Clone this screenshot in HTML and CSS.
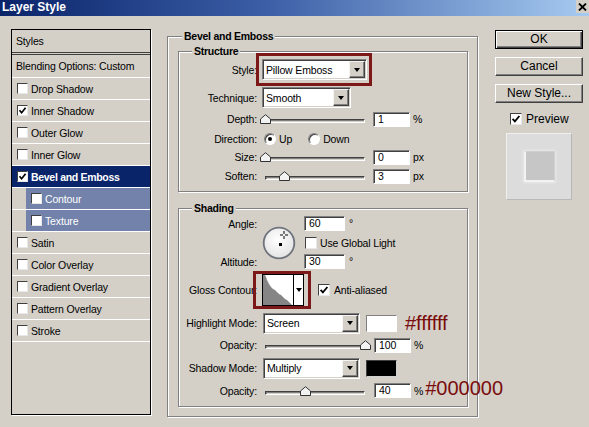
FILE: index.html
```html
<!DOCTYPE html>
<html>
<head>
<meta charset="utf-8">
<link rel="stylesheet" href="styles.css">
</head>
<body>
<div class="dialog">
  <div class="titlebar">
    <span class="title">Layer Style</span>
    <span class="close"><svg width="9" height="8" viewBox="0 0 9 8"><path d="M1 0.5 L8 7.5 M8 0.5 L1 7.5" stroke="#000" stroke-width="1.8"/></svg></span>
  </div>
  <div class="main">
    <div class="list">
      <div class="item head styles">Styles</div>
      <div class="item head blend">Blending Options: Custom</div>
      <div class="item"><span class="cb"></span>Drop Shadow</div>
      <div class="item"><span class="cb"><svg width="9" height="9" viewBox="0 0 9 9"><path d="M1.5 4.3 L3.6 6.7 L7.6 1.8" fill="none" stroke="#000" stroke-width="1.7"/></svg></span>Inner Shadow</div>
      <div class="item"><span class="cb"></span>Outer Glow</div>
      <div class="item"><span class="cb"></span>Inner Glow</div>
      <div class="item sel"><span class="cb"><svg width="9" height="9" viewBox="0 0 9 9"><path d="M1.5 4.3 L3.6 6.7 L7.6 1.8" fill="none" stroke="#000" stroke-width="1.7"/></svg></span>Bevel and Emboss</div>
      <div class="item sub"><span class="cb"></span>Contour</div>
      <div class="item sub"><span class="cb"></span>Texture</div>
      <div class="item"><span class="cb"></span>Satin</div>
      <div class="item"><span class="cb"></span>Color Overlay</div>
      <div class="item"><span class="cb"></span>Gradient Overlay</div>
      <div class="item"><span class="cb"></span>Pattern Overlay</div>
      <div class="item"><span class="cb"></span>Stroke</div>
    </div>

    <div class="group outer">
      <span class="gtitle">Bevel and Emboss</span>

      <div class="group structure">
        <span class="gtitle">Structure</span>
        <div class="row r-style">
          <span class="lbl">Style:</span>
          <div class="redbox rb-style">
            <div class="select w-style"><span class="val">Pillow Emboss</span><span class="arrow"><span class="tri"></span></span></div>
          </div>
        </div>
        <div class="row r-tech">
          <span class="lbl">Technique:</span>
          <div class="select w-tech"><span class="val">Smooth</span><span class="arrow"><span class="tri"></span></span></div>
        </div>
        <div class="row r-depth">
          <span class="lbl">Depth:</span>
          <div class="slider"><div class="track"></div><svg class="thumb" style="left:0%" width="11" height="10" viewBox="0 0 11 10"><path d="M0.5 9.5 L0.5 5 L5.5 0.7 L10.5 5 L10.5 9.5 Z" fill="#f2f2f2" stroke="#333" stroke-width="1"/></svg></div>
          <span class="num">1</span><span class="unit">%</span>
        </div>
        <div class="row r-dir">
          <span class="lbl">Direction:</span>
          <span class="radio on"></span><span class="rtext">Up</span>
          <span class="radio gap"></span><span class="rtext">Down</span>
        </div>
        <div class="row r-size">
          <span class="lbl">Size:</span>
          <div class="slider"><div class="track"></div><svg class="thumb" style="left:0%" width="11" height="10" viewBox="0 0 11 10"><path d="M0.5 9.5 L0.5 5 L5.5 0.7 L10.5 5 L10.5 9.5 Z" fill="#f2f2f2" stroke="#333" stroke-width="1"/></svg></div>
          <span class="num">0</span><span class="unit">px</span>
        </div>
        <div class="row r-soft">
          <span class="lbl">Soften:</span>
          <div class="slider"><div class="track"></div><svg class="thumb" style="left:19%" width="11" height="10" viewBox="0 0 11 10"><path d="M0.5 9.5 L0.5 5 L5.5 0.7 L10.5 5 L10.5 9.5 Z" fill="#f2f2f2" stroke="#333" stroke-width="1"/></svg></div>
          <span class="num">3</span><span class="unit">px</span>
        </div>
      </div>

      <div class="group shading">
        <span class="gtitle">Shading</span>
        <div class="angle">
          <span class="lbl g1">Angle:</span>
          <svg class="dial" width="34" height="34" viewBox="0 0 34 34">
            <defs><radialGradient id="dg" cx="0.45" cy="0.4" r="0.6"><stop offset="0" stop-color="#ffffff"/><stop offset="1" stop-color="#e4e4e4"/></radialGradient></defs>
            <circle cx="17" cy="17" r="15.3" fill="url(#dg)" stroke="#6f747c" stroke-width="1.8"/>
            <rect x="17" y="17" width="3" height="3" fill="#000"/>
            <path d="M22 5 V8 M22 10 V13 M18 9 H21 M23 9 H26" stroke="#000" stroke-width="1"/>
          </svg>
          <div class="cell c1"><span class="num w-ang">60</span><span class="deg">°</span></div>
          <div class="cell c2"><span class="cb big"></span><span class="ctext">Use Global Light</span></div>
          <span class="lbl g3">Altitude:</span>
          <div class="cell c3"><span class="num w-ang">30</span><span class="deg">°</span></div>
        </div>
        <div class="row r-gloss">
          <span class="lbl">Gloss Contour:</span>
          <div class="redbox rb-gloss">
            <div class="contour">
              <svg width="30" height="30" viewBox="0 0 30 30"><path d="M0 0 L2 0 L3 2 L4 5 L6 9 L8 12 L10 14 L12 15 L14 17 L16 19 L18 20 L20 22 L22 24 L24 25 L26 27 L28 29 L29 30 L0 30 Z" fill="#858585"/></svg>
              <span class="carrow"><span class="tri"></span></span>
            </div>
          </div>
          <span class="cb big aa"><svg width="10" height="10" viewBox="0 0 10 10"><path d="M1.6 4.8 L3.9 7.4 L8.4 2" fill="none" stroke="#000" stroke-width="1.8"/></svg></span><span class="ctext">Anti-aliased</span>
        </div>
        <div class="row r-hl">
          <span class="lbl">Highlight Mode:</span>
          <div class="select w-mode"><span class="val">Screen</span><span class="arrow"><span class="tri"></span></span></div>
          <span class="swatch white"></span>
          <span class="hex">#ffffff</span>
        </div>
        <div class="row r-op1">
          <span class="lbl">Opacity:</span>
          <div class="slider"><div class="track"></div><svg class="thumb" style="left:100%" width="11" height="10" viewBox="0 0 11 10"><path d="M0.5 9.5 L0.5 5 L5.5 0.7 L10.5 5 L10.5 9.5 Z" fill="#f2f2f2" stroke="#333" stroke-width="1"/></svg></div>
          <span class="num n2">100</span><span class="unit">%</span>
        </div>
        <div class="row r-sh">
          <span class="lbl">Shadow Mode:</span>
          <div class="select w-mode"><span class="val">Multiply</span><span class="arrow"><span class="tri"></span></span></div>
          <span class="swatch black"></span>
        </div>
        <div class="row r-op2">
          <span class="lbl">Opacity:</span>
          <div class="slider"><div class="track"></div><svg class="thumb" style="left:40%" width="11" height="10" viewBox="0 0 11 10"><path d="M0.5 9.5 L0.5 5 L5.5 0.7 L10.5 5 L10.5 9.5 Z" fill="#f2f2f2" stroke="#333" stroke-width="1"/></svg></div>
          <span class="num n2">40</span><span class="unit">%</span><span class="hex hex2">#000000</span>
        </div>
      </div>
    </div>

    <div class="side">
      <div class="btn default">OK</div>
      <div class="btn">Cancel</div>
      <div class="btn">New Style...</div>
      <div class="prev-row"><span class="cb big"><svg width="10" height="10" viewBox="0 0 10 10"><path d="M1.6 4.8 L3.9 7.4 L8.4 2" fill="none" stroke="#000" stroke-width="1.8"/></svg></span><span class="ptext">Preview</span></div>
      <div class="preview"><div class="psq"></div></div>
    </div>
  </div>
</div>
</body>
</html>
```
FILE: styles.css
```css
* { box-sizing: border-box; }
body {
  margin: 0;
  background: #d4d0c8;
  font-family: "Liberation Sans", Arial, sans-serif;
  font-size: 10.5px;
  letter-spacing: -0.15px;
  color: #000;
}
.dialog { width: 589px; height: 427px; background: #d4d0c8; overflow: hidden; }

.titlebar {
  height: 16px;
  background: linear-gradient(to right, #0a246a 0%, #3b5ea6 45%, #a6caf0 100%);
  display: flex;
  justify-content: space-between;
  align-items: flex-start;
}
.title { color: #fff; font-weight: bold; font-size: 12px; line-height: 15px; padding-left: 2px; letter-spacing: 0; }
.close { width: 13px; height: 13px; background: #d4d0c8; display: flex; align-items: center; justify-content: center; }

.main { display: flex; align-items: flex-start; padding: 13px 0 0 11px; }

/* left list */
.list { width: 140px; height: 386px; border: 1px solid #000; box-shadow: 1px 1px 0 #fff; flex: none; }
.item {
  height: 22px;
  border-bottom: 1px solid #fff;
  display: flex;
  align-items: center;
  padding-left: 5px;
  white-space: nowrap;
}
.item.head { padding-left: 4px; }
.item.styles { height: 25px; border-bottom: 3px double #404040; }
.item.blend { height: 23px; }
.item.sel { background: #0a246a; color: #fff; font-weight: bold; letter-spacing: -0.3px; }
.item.sub { background: linear-gradient(to right, transparent 14px, #7282aa 14px); color: #fff; padding-left: 19px; }
.cb {
  width: 11px; height: 11px; flex: none;
  background: #fff;
  border: 1px solid;
  border-color: #404040 #e8e8e8 #e8e8e8 #404040;
  display: flex; align-items: center; justify-content: center;
  margin-right: 3px;
}
.cb.big { width: 12px; height: 12px; margin-right: 0; }

/* groups */
.group { position: relative; border: 1px solid #808080; box-shadow: inset 1px 1px 0 #fff, 1px 1px 0 #fff; }
.gtitle {
  position: absolute; top: -7px; left: 13px;
  padding: 0 2px; background: #d4d0c8;
  font-weight: bold; line-height: 13px; letter-spacing: -0.25px; white-space: nowrap;
}
.outer { flex: none; margin: 7px 0 0 16px; width: 311px; height: 381px; padding: 14px 0 0 10px; }
.outer > .gtitle { left: 14px; }
.structure { width: 290px; height: 141px; padding-top: 1px; }
.shading { width: 290px; height: 199px; margin-top: 16px; padding-top: 5px; }

.row { display: flex; align-items: center; white-space: nowrap; }
.lbl { width: 78px; text-align: right; flex: none; margin-right: 5px; }

.r-style { height: 33px; }
.r-tech { height: 21px; margin-top: 1px; }
.r-depth { height: 22px; }
.r-dir { height: 18px; }
.r-size { height: 18px; }
.r-soft { height: 20px; }

.redbox { border: 3px solid #7d1818; flex: none; display: flex; }
.rb-style { margin-left: -6px; width: 116px; height: 33px; padding: 3px 0 0 3px; }

.select {
  display: flex; height: 21px; flex: none;
  background: #fff;
  border: 1px solid;
  border-color: #808080 #fff #fff #808080;
  box-shadow: inset 1px 1px 0 #404040, inset -1px -1px 0 #d4d0c8;
}
.w-style { width: 105px; }
.w-tech { width: 89px; }
.w-mode { width: 97px; margin-left: 1px; }
.select .val { flex: 1; padding-left: 3px; display: flex; align-items: center; font-size: 10.5px; }
.arrow {
  width: 16px; margin: 1px 1px 1px 0;
  background: #d4d0c8;
  border: 1px solid; border-color: #f4f4f4 #404040 #404040 #f4f4f4;
  box-shadow: inset -1px -1px 0 #808080;
  display: flex; align-items: center; justify-content: center;
}
.tri { width: 0; height: 0; border-left: 3.5px solid transparent; border-right: 3.5px solid transparent; border-top: 4px solid #000; }

.slider { position: relative; width: 100px; height: 10px; margin-left: 3px; display: flex; align-items: flex-end; flex: none; }
.track {
  flex: 1; height: 4px; margin-bottom: 1px;
  background: #d4d0c8;
  border: 1px solid; border-color: #404040 #fff #fff #404040;
  box-shadow: inset 1px 1px 0 #808080;
}
.thumb { position: absolute; top: 0; margin-left: -5px; }

.num {
  width: 37px; height: 15px; flex: none; margin-left: 8px;
  background: #fff;
  border: 1px solid; border-color: #808080 #fff #fff #808080;
  box-shadow: inset 1px 1px 0 #404040;
  padding-left: 4px; font-size: 10.5px; line-height: 13px;
}
.num.n2 { margin-left: 9px; }
.unit { margin-left: 3px; }

.radio {
  width: 12px; height: 12px; flex: none; margin-left: 2px;
  border-radius: 50%;
  background: #fff;
  border: 1px solid; border-color: #808080 #fff #fff #808080;
  box-shadow: inset 1px 1px 0 #404040;
  display: flex; align-items: center; justify-content: center;
}
.radio.on::after { content: ""; width: 4px; height: 4px; border-radius: 50%; background: #000; }
.radio.gap { margin-left: 16px; }
.rtext { margin-left: 3px; }

/* shading */
.angle { display: grid; grid-template-columns: 83px 42px 1fr; grid-template-rows: 19px 19px 19px; align-items: center; }
.angle .lbl { width: auto; margin-right: 0; padding-right: 5px; grid-column: 1; }
.g1 { grid-row: 1; }
.g3 { grid-row: 3; }
.dial { grid-column: 2; grid-row: 1 / 4; align-self: center; margin-top: 1px; }
.cell { grid-column: 3; display: flex; align-items: center; }
.c1 { grid-row: 1; }
.c2 { grid-row: 2; }
.c3 { grid-row: 3; }
.num.w-ang { width: 41px; margin-left: 0; }
.deg { margin-left: 4px; align-self: flex-start; margin-top: 1px; }
.c2 .cb { margin-left: 1px; }
.ctext { margin-left: 3px; }

.r-gloss { height: 38px; }
.rb-gloss { margin-left: -9px; width: 58px; height: 38px; padding: 0 0 0 6px; align-items: center; }
.contour { width: 42px; height: 32px; border: 1px solid #000; background: #fff; display: flex; flex: none; }
.contour svg { display: block; }
.carrow { flex: 1; border-left: 1px solid #000; display: flex; align-items: center; justify-content: center; }
.aa { margin-left: 7px; }
.r-gloss .ctext { margin-left: 4px; }

.r-hl { height: 22px; margin-top: 3px; }
.r-op1 { height: 22px; }
.r-sh { height: 24px; }
.r-op2 { height: 21px; }

.swatch { width: 31px; height: 17px; margin-left: 6px; flex: none; border: 1px solid; border-color: #808080 #fff #fff #808080; }
.swatch.white { background: #fff; }
.swatch.black { background: #000; border-color: #404040 #d0d0d0 #d0d0d0 #404040; }
.hex { margin-left: 8px; font-size: 20px; letter-spacing: 0; color: #7a0d0d; line-height: 20px; }
.hex2 { margin-left: 2px; margin-top: -5px; }

/* side */
.side { flex: none; margin: 1px 0 0 17px; width: 88px; display: flex; flex-direction: column; }
.btn {
  height: 19px;
  background: #d4d0c8;
  border: 1px solid; border-color: #fff #404040 #404040 #fff;
  box-shadow: inset -1px -1px 0 #808080;
  text-align: center; font-size: 12px; line-height: 17px; letter-spacing: 0;
  margin-bottom: 8px;
}
.btn.default { border-color: #000; box-shadow: inset 1px 1px 0 #fff, inset -1px -1px 0 #404040, inset -2px -2px 0 #808080; }
.prev-row { height: 18px; display: flex; align-items: center; margin-top: -1px; }
.prev-row .cb { margin-left: 15px; }
.ptext { margin-left: 4px; font-size: 12px; letter-spacing: 0; }
.preview {
  margin: 5px 0 0 11px; width: 66px; height: 67px;
  background: #dcdcdc;
  border: 1px solid; border-color: #f0f0f0 #b8b8b8 #b8b8b8 #f0f0f0;
  display: flex; align-items: center; justify-content: center;
}
.psq {
  width: 31px; height: 31px;
  background: #c6c6c6;
  border-left: 2px solid #f2f2f2;
  border-bottom: 2px solid #f2f2f2;
  border-top: 1px solid #d0d0d0;
  border-right: 1px solid #d0d0d0;
  box-shadow: 0 0 2px 1px #e8e8e8;
}
```
